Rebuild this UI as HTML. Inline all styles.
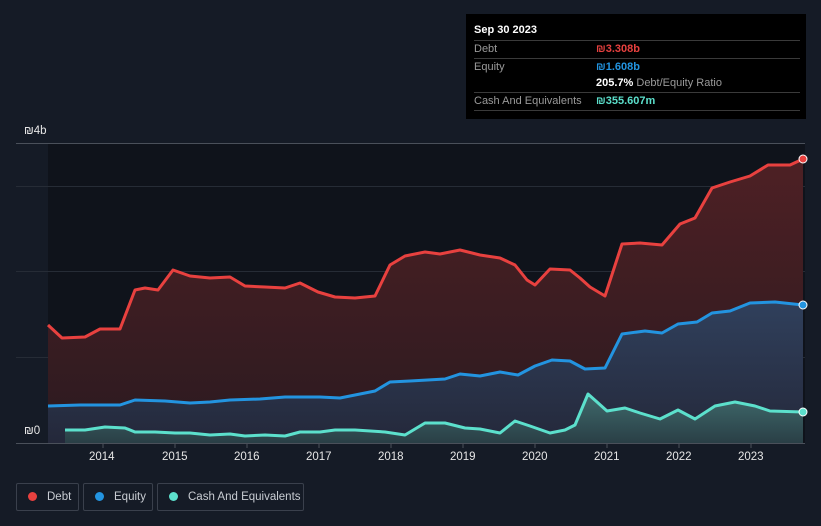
<!DOCTYPE html>
<html><head><meta charset="utf-8"><style>
body{margin:0;width:821px;height:526px;background:#151b26;font-family:"Liberation Sans",sans-serif;overflow:hidden;position:relative}
.tip{position:absolute;left:466px;top:14px;width:340px;height:105px;background:#000;color:#fff;font-size:11px}
.tip .row{position:absolute;left:8px;right:6px;height:17px;line-height:17px;border-top:1px solid #3a3a3a}
.lab{color:#9a9a9a;font-weight:normal}
.val{position:absolute;left:122px;top:0;font-weight:bold}
.leg{position:absolute;top:483px;border:1px solid #3a404c;border-radius:2px;color:#c8ccd2;font-size:11.5px;line-height:26px;white-space:nowrap;box-sizing:border-box;height:28px}
.dot{display:inline-block;width:9px;height:9px;border-radius:50%;margin:0 10px 0 11px;vertical-align:-1px}
.ax{position:absolute;color:#e6e6e6;font-size:11.5px}
</style></head><body>
<svg width="821" height="526" style="position:absolute;left:0;top:0">
<defs>
<linearGradient id="gd" x1="0" y1="0" x2="0" y2="1"><stop offset="0" stop-color="#4e2024"/><stop offset="1" stop-color="#2b1a20"/></linearGradient>
<linearGradient id="ge" x1="0" y1="0" x2="0" y2="1"><stop offset="0" stop-color="#30405c"/><stop offset="1" stop-color="#24283a"/></linearGradient>
<linearGradient id="gc" x1="0" y1="0" x2="0" y2="1"><stop offset="0" stop-color="#3f6a6c"/><stop offset="1" stop-color="#2a3f46"/></linearGradient>
</defs>
<rect x="48" y="143" width="757" height="300" fill="#0f131b"/>
<g stroke="#262c36" stroke-width="1">
<line x1="16" y1="186.5" x2="805" y2="186.5"/><line x1="16" y1="271.5" x2="805" y2="271.5"/><line x1="16" y1="357.5" x2="805" y2="357.5"/>
</g>
<line x1="16" y1="143.5" x2="805" y2="143.5" stroke="#4a505a"/>
<polygon fill="url(#gd)" points="48,325 62,338 85,337 100,329 120,329 135,290 145,288 158,290 173,270 190,276 210,278 230,277 245,286 265,287 285,288 300,283 318,292 335,297 355,298 375,296 390,265 405,256 425,252 440,254 460,250 480,255 500,258 515,265 527,280 535,285 550,269 570,270 580,278 590,287 605,296 622,244 640,243 662,245 680,224 695,218 712,188 730,182 750,176 768,165 790,165 803,159 803,443 48,443"/>
<polygon fill="url(#ge)" points="48,406 80,405 120,405 135,400 165,401 190,403 210,402 230,400 260,399 285,397 320,397 340,398 355,395 375,391 390,382 410,381 445,379 460,374 480,376 500,372 518,375 535,366 552,360 570,361 585,369 605,368 622,334 645,331 662,333 678,324 697,322 712,313 730,311 750,303 775,302 803,305 803,443 48,443"/>
<polygon fill="url(#gc)" points="65,430 85,430 105,427 125,428 135,432 155,432 175,433 190,433 210,435 230,434 245,436 265,435 285,436 300,432 320,432 335,430 355,430 385,432 405,435 425,423 445,423 465,428 480,429 500,433 515,421 530,426 550,433 565,430 575,425 588,394 597,402 607,411 625,408 640,413 660,419 678,410 695,419 715,406 735,402 755,406 770,411 803,412 803,443 65,443"/>
<g fill="none" stroke-width="3" stroke-linejoin="round">
<polyline stroke="#e8413f" points="48,325 62,338 85,337 100,329 120,329 135,290 145,288 158,290 173,270 190,276 210,278 230,277 245,286 265,287 285,288 300,283 318,292 335,297 355,298 375,296 390,265 405,256 425,252 440,254 460,250 480,255 500,258 515,265 527,280 535,285 550,269 570,270 580,278 590,287 605,296 622,244 640,243 662,245 680,224 695,218 712,188 730,182 750,176 768,165 790,165 803,159"/>
<polyline stroke="#2394e0" points="48,406 80,405 120,405 135,400 165,401 190,403 210,402 230,400 260,399 285,397 320,397 340,398 355,395 375,391 390,382 410,381 445,379 460,374 480,376 500,372 518,375 535,366 552,360 570,361 585,369 605,368 622,334 645,331 662,333 678,324 697,322 712,313 730,311 750,303 775,302 803,305"/>
<polyline stroke="#5ce0cc" points="65,430 85,430 105,427 125,428 135,432 155,432 175,433 190,433 210,435 230,434 245,436 265,435 285,436 300,432 320,432 335,430 355,430 385,432 405,435 425,423 445,423 465,428 480,429 500,433 515,421 530,426 550,433 565,430 575,425 588,394 597,402 607,411 625,408 640,413 660,419 678,410 695,419 715,406 735,402 755,406 770,411 803,412"/>
</g>
<circle cx="803" cy="159" r="4" fill="#e8413f" stroke="#fff" stroke-width="1"/>
<circle cx="803" cy="305" r="4" fill="#2394e0" stroke="#fff" stroke-width="1"/>
<circle cx="803" cy="412" r="4" fill="#5ce0cc" stroke="#fff" stroke-width="1"/>
<line x1="16" y1="443.5" x2="805" y2="443.5" stroke="#4a505a"/>
<g stroke="#4a505a"><line x1="103" y1="443" x2="103" y2="448"/><line x1="175" y1="443" x2="175" y2="448"/><line x1="247" y1="443" x2="247" y2="448"/><line x1="319" y1="443" x2="319" y2="448"/><line x1="391" y1="443" x2="391" y2="448"/><line x1="463" y1="443" x2="463" y2="448"/><line x1="535" y1="443" x2="535" y2="448"/><line x1="607" y1="443" x2="607" y2="448"/><line x1="679" y1="443" x2="679" y2="448"/><line x1="751" y1="443" x2="751" y2="448"/></g>
</svg>
<div class="ax" style="left:24px;top:125px">₪4b</div>
<div class="ax" style="left:24px;top:425px">₪0</div>
<div class="ax" style="left:89px;top:451px">2014</div><div class="ax" style="left:162px;top:451px">2015</div><div class="ax" style="left:234px;top:451px">2016</div><div class="ax" style="left:306px;top:451px">2017</div><div class="ax" style="left:378px;top:451px">2018</div><div class="ax" style="left:450px;top:451px">2019</div><div class="ax" style="left:522px;top:451px">2020</div><div class="ax" style="left:594px;top:451px">2021</div><div class="ax" style="left:666px;top:451px">2022</div><div class="ax" style="left:738px;top:451px">2023</div>
<div class="tip">
<div style="position:absolute;left:8px;top:10px;font-weight:bold">Sep 30 2023</div>
<div class="row" style="top:26px"><span class="lab">Debt</span><span class="val" style="color:#e8413f">₪3.308b</span></div>
<div class="row" style="top:44px"><span class="lab">Equity</span><span class="val" style="color:#2394e0">₪1.608b</span></div>
<div class="row" style="top:61px;border-top:none"><span class="val">205.7% <span class="lab">Debt/Equity Ratio</span></span></div>
<div class="row" style="top:78px"><span class="lab">Cash And Equivalents</span><span class="val" style="color:#5ce0cc">₪355.607m</span></div>
<div style="position:absolute;left:8px;right:6px;top:96px;border-top:1px solid #3a3a3a"></div>
</div>
<div class="leg" style="left:16px;width:63px"><span class="dot" style="background:#e8413f"></span>Debt</div>
<div class="leg" style="left:83px;width:70px"><span class="dot" style="background:#2394e0"></span>Equity</div>
<div class="leg" style="left:157px;width:147px"><span class="dot" style="background:#5ce0cc"></span>Cash And Equivalents</div>
</body></html>
